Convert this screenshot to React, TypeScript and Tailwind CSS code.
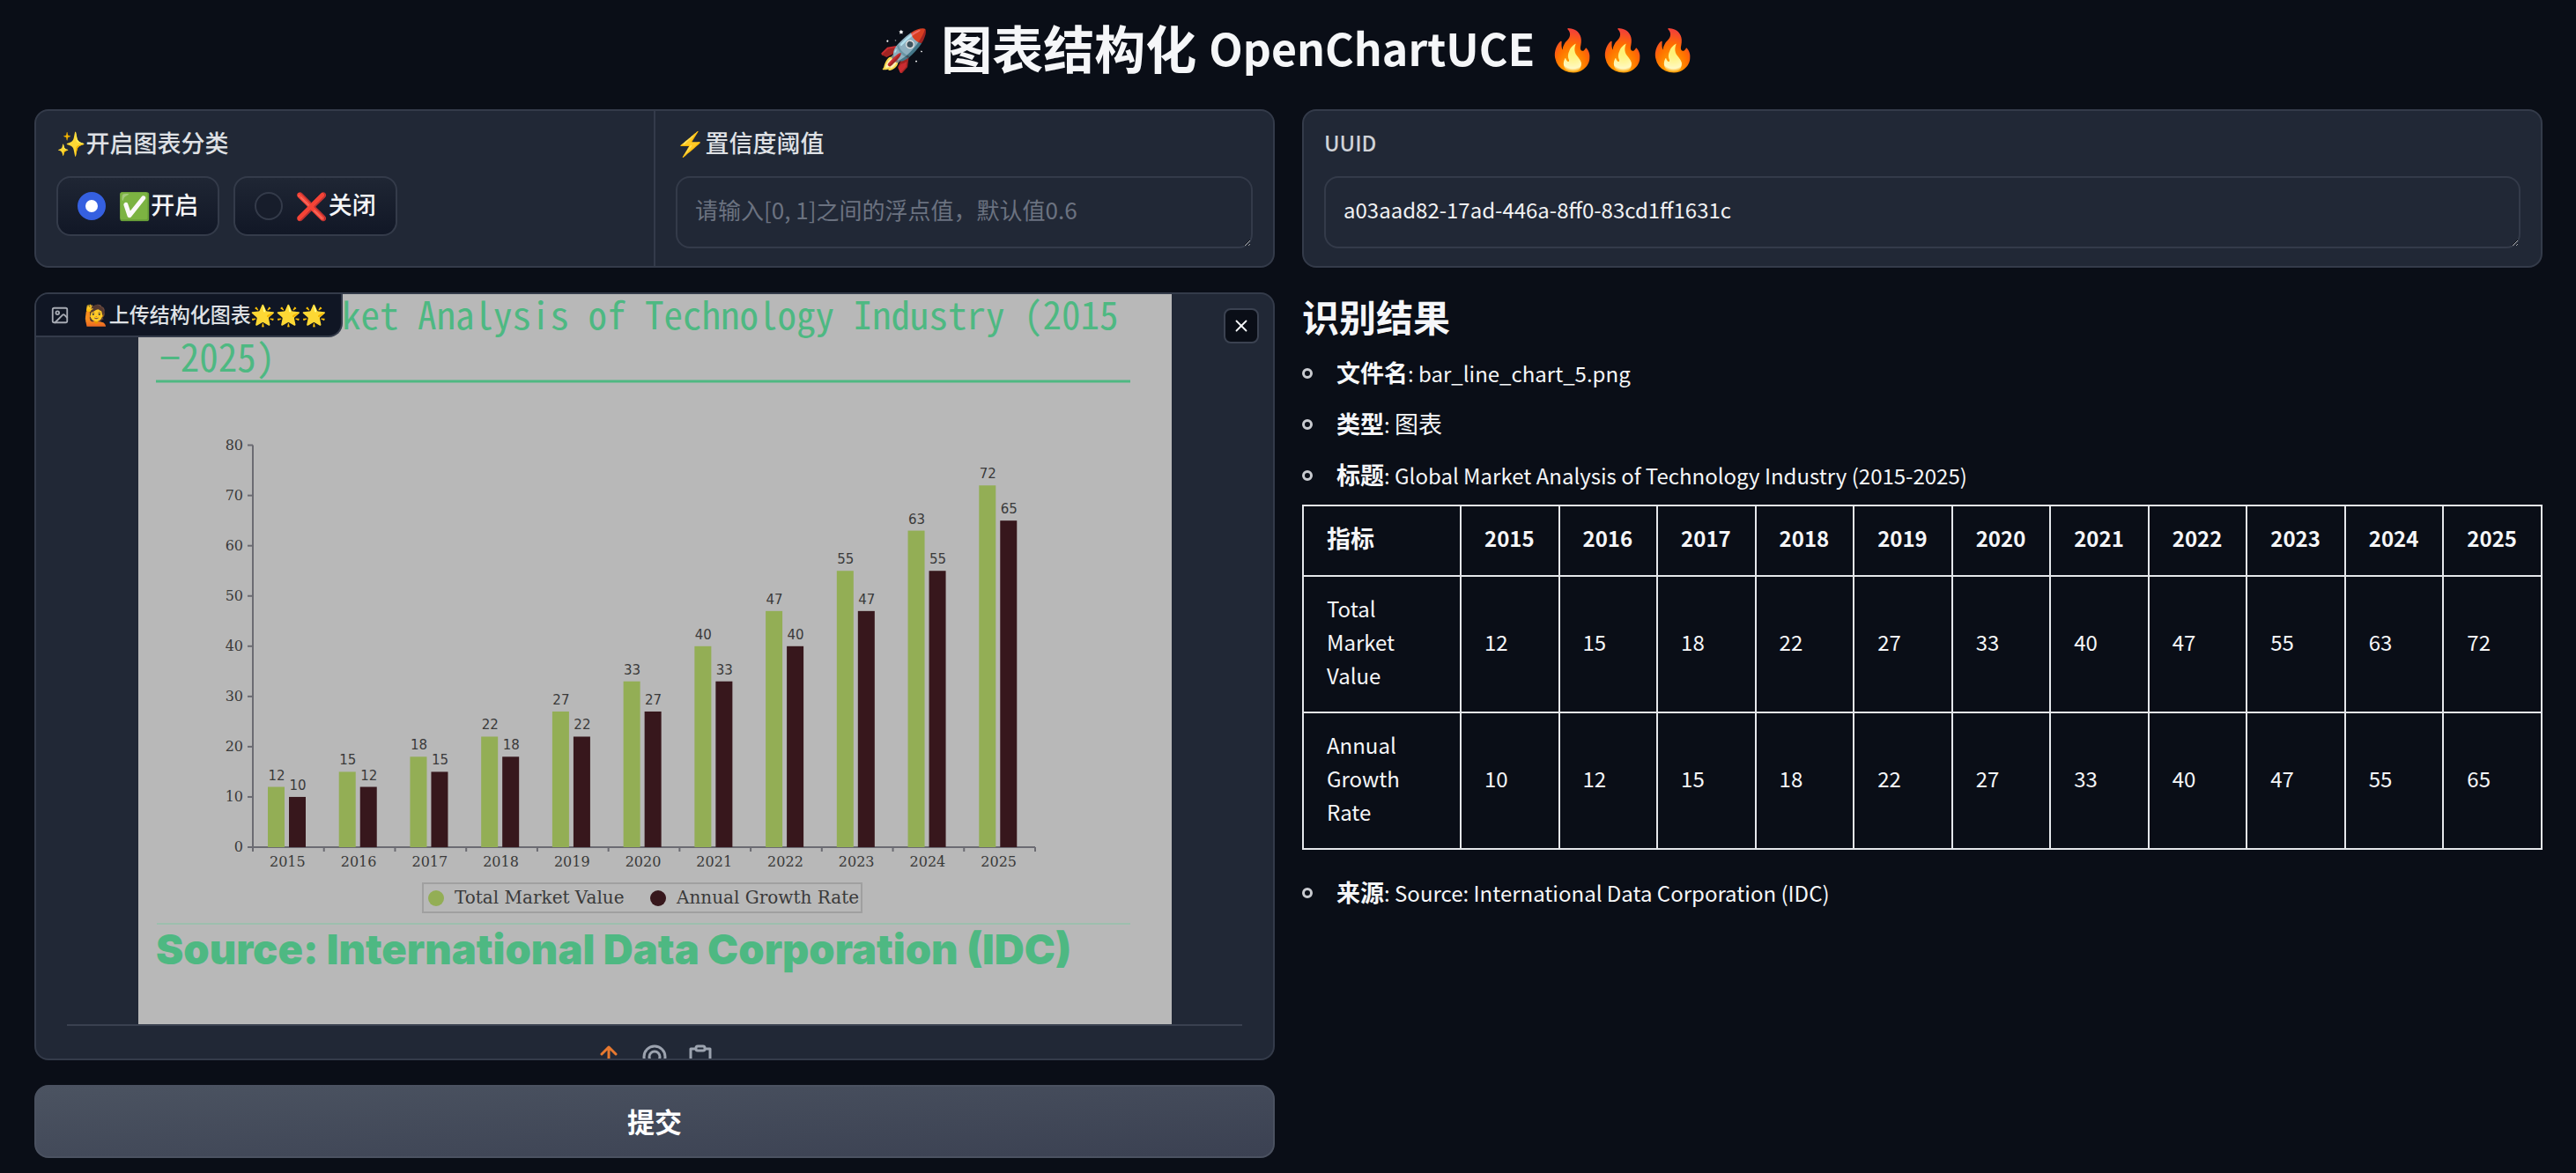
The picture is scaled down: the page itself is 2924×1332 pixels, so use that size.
import { useState } from 'react';
import type { ReactNode } from 'react';
import { Image as ImageIcon, X } from 'lucide-react';

const years = [2015, 2016, 2017, 2018, 2019, 2020, 2021, 2022, 2023, 2024, 2025];
const marketValue = [12, 15, 18, 22, 27, 33, 40, 47, 55, 63, 72];
const growthRate = [10, 12, 15, 18, 22, 27, 33, 40, 47, 55, 65];
const ticks = [0, 10, 20, 30, 40, 50, 60, 70, 80];

const AXIS_X = 130;
const AXIS_Y = 628;
const AXIS_END = 1018;
const STEP = (AXIS_END - AXIS_X) / years.length;
const UNIT = 5.705;

function Bar({ x, value, color }: { x: number; value: number; color: string }) {
  const top = AXIS_Y - value * UNIT;
  return (
    <g>
      <rect x={x} y={top} width={19} height={value * UNIT} fill={color} />
      <text x={x + 10} y={top - 8} textAnchor="middle" className="fill-[#3a3a3a] font-['DejaVu_Sans'] text-[15px]">
        {value}
      </text>
    </g>
  );
}

function UploadedChart() {
  return (
    <svg
      viewBox="0 0 1173 829"
      role="img"
      aria-label="Global Market Analysis of Technology Industry"
      className="h-auto w-full max-w-[1173px] bg-[#b8b8b8]"
    >
      <g className="fill-[#4eb882] font-['Noto_Sans_Mono_CJK_SC',monospace] text-[43px]">
        <text x="16" y="40">Global Market Analysis of Technology Industry (2015</text>
        <text x="24" y="88">−2025)</text>
      </g>
      <line x1="20" x2="1126" y1="99" y2="99" stroke="#4eb882" strokeWidth="3" />

      <g stroke="#6b6b72" strokeWidth="2">
        <line x1={AXIS_X} x2={AXIS_X} y1={AXIS_Y - 80 * UNIT} y2={AXIS_Y + 5} />
        <line x1={AXIS_X - 6} x2={AXIS_END} y1={AXIS_Y} y2={AXIS_Y} />
        {ticks.map((t) => (
          <line key={t} x1={AXIS_X - 6} x2={AXIS_X} y1={AXIS_Y - t * UNIT} y2={AXIS_Y - t * UNIT} />
        ))}
        {years.map((y, i) => (
          <line key={y} x1={AXIS_X + (i + 1) * STEP} x2={AXIS_X + (i + 1) * STEP} y1={AXIS_Y} y2={AXIS_Y + 5} />
        ))}
      </g>
      <g className="fill-[#3a3a3a] font-['DejaVu_Serif'] text-[16px]">
        {ticks.map((t) => (
          <text key={t} x={AXIS_X - 11} y={AXIS_Y - t * UNIT + 5} textAnchor="end">
            {t}
          </text>
        ))}
        {years.map((y, i) => (
          <text key={y} x={AXIS_X - 1 + (i + 0.5) * STEP} y={AXIS_Y + 22} textAnchor="middle">
            {y}
          </text>
        ))}
      </g>
      {years.map((y, i) => (
        <g key={y}>
          <Bar x={AXIS_X + i * STEP + 17} value={marketValue[i]} color="#93ae55" />
          <Bar x={AXIS_X + i * STEP + 41} value={growthRate[i]} color="#37171c" />
        </g>
      ))}

      <rect x="323" y="669" width="498" height="33" fill="none" stroke="#a0a0a0" strokeWidth="2" />
      <circle cx="338" cy="686" r="9" fill="#93ae55" />
      <circle cx="590" cy="686" r="9" fill="#37171c" />
      <g className="fill-[#3a3a3a] font-['DejaVu_Serif'] text-[20px]">
        <text x="359" y="692">Total Market Value</text>
        <text x="611" y="692">Annual Growth Rate</text>
      </g>

      <line x1="21" x2="1126" y1="715" y2="715" stroke="#9dbfae" strokeWidth="2" />
      <text x="20" y="761" className="fill-[#4eb882] font-['Inter'] text-[47px] font-black">
        Source: International Data Corporation (IDC)
      </text>
    </svg>
  );
}

function RadioPill({ emoji, text, checked, onChange }: { emoji: string; text: string; checked: boolean; onChange: () => void }) {
  return (
    <label className="flex h-[68px] cursor-pointer items-center gap-3.5 rounded-2xl border-2 border-[#343b4a] bg-linear-to-b from-[#1f2634] to-[#111726] px-[22px]">
      <input
        type="radio"
        name="classify"
        checked={checked}
        onChange={onChange}
        className="size-8 appearance-none rounded-full border-2 border-[#343b4a] bg-[#171d2b] checked:border-[9px] checked:border-[#3560e0] checked:bg-white"
      />
      <span className="flex items-center pb-1">
        <span className="text-[30px] leading-9">{emoji}</span>
        <span className="leading-9">{text}</span>
      </span>
    </label>
  );
}

const labelClass = 'flex h-9 items-center text-[27px] font-medium text-[#dfe1e5]';
const areaClass =
  'block h-[82px] w-full resize rounded-2xl border-2 border-[#343b4a] bg-[#212836] px-5 pt-[17px] pb-5 leading-[38px] text-[#f0f1f3] outline-none placeholder:text-[#6b7280]';

function ResultItem({ name, children }: { name: string; children: ReactNode }) {
  return (
    <li className="flex h-[38px] items-center gap-[27px]">
      <span className="size-3 rounded-full border-[3px] border-[#c9cbd0]" />
      <span>
        <strong className="text-[27px] leading-none">{name}</strong>: {children}
      </span>
    </li>
  );
}

const cellClass = 'border-2 border-[#e5e7eb] px-[26px] text-left';

function ResultTable() {
  const rows = [
    { name: 'Total Market Value', values: marketValue },
    { name: 'Annual Growth Rate', values: growthRate },
  ];
  return (
    <table className="mt-[14px] mb-[30px] w-full table-fixed border-collapse leading-[38px]">
      <thead>
        <tr>
          <th className={`${cellClass} w-[179px] pt-[17px] pb-[23px] text-[27px]`}>指标</th>
          {years.map((y) => (
            <th key={y} className={`${cellClass} pt-[17px] pb-[23px]`}>{y}</th>
          ))}
        </tr>
      </thead>
      <tbody>
        {rows.map((row) => (
          <tr key={row.name}>
            <td className={`${cellClass} pt-[17px] pb-[22px]`}>
              <span className="block w-min">{row.name}</span>
            </td>
            {row.values.map((v, i) => (
              <td key={years[i]} className={`${cellClass} pt-[17px] pb-[22px]`}>{v}</td>
            ))}
          </tr>
        ))}
      </tbody>
    </table>
  );
}

export default function App() {
  const [enabled, setEnabled] = useState(true);
  return (
    <main className="min-h-screen bg-[#0a0e17] pt-[11px] pr-[38px] pb-4 pl-[39px] font-['Noto_Sans_CJK_SC','Noto_Color_Emoji',sans-serif] text-[24px] text-[#f5f6f8] scheme-dark">
      <h1 className="mb-[29px] flex h-[84px] items-center justify-center gap-3.5 text-[50px] font-bold">
        <span className="text-[46px]">🚀</span>
        <span className="text-[58px]">图表结构化</span>
        <span>OpenChartUCE</span>
        <span className="text-[46px]">🔥🔥🔥</span>
      </h1>

      <div className="grid grid-cols-2 gap-[31px]">
        <div className="flex flex-col gap-7">
          <div className="grid grid-cols-2 gap-[2px] overflow-hidden rounded-2xl border-2 border-[#343b4a] bg-[#343b4a]">
            <div role="radiogroup" aria-labelledby="classify-label" className="bg-[#212836] px-[23px] pt-[18px] pb-5">
              <div id="classify-label" className={labelClass}>
                ✨开启图表分类
              </div>
              <div className="mt-5 flex gap-4 text-[27px] font-medium">
                <RadioPill emoji="✅" text="开启" checked={enabled} onChange={() => setEnabled(true)} />
                <RadioPill emoji="❌" text="关闭" checked={!enabled} onChange={() => setEnabled(false)} />
              </div>
            </div>
            <div className="bg-[#212836] px-[23px] pt-[18px] pb-5">
              <label htmlFor="threshold" className={labelClass}>
                ⚡置信度阈值
              </label>
              <div className="mt-5">
                <textarea id="threshold" rows={1} placeholder="请输入[0, 1]之间的浮点值，默认值0.6" className={`${areaClass} text-[26px]`} />
              </div>
            </div>
          </div>

          <section className="relative h-[872px] overflow-hidden rounded-2xl border-2 border-[#343b4a] bg-[#212836]">
            <div className="flex justify-center">
              <UploadedChart />
            </div>
            <div className="mx-[35px] flex justify-center gap-5 border-t-2 border-[#3a4150] pt-[19px]">
              <button type="button" aria-label="Upload" className="size-8">
                <svg viewBox="0 0 32 32" fill="none" stroke="#e8792f" strokeWidth="3" strokeLinecap="round" strokeLinejoin="round">
                  <path d="M8 13l8-8 8 8M16 5v20" />
                </svg>
              </button>
              <button type="button" aria-label="Webcam" className="size-8">
                <svg viewBox="0 0 32 32" fill="none" stroke="#9ca3af" strokeWidth="3">
                  <circle cx="16" cy="16" r="12" />
                  <circle cx="16" cy="16" r="6" />
                </svg>
              </button>
              <button type="button" aria-label="Paste" className="size-8">
                <svg viewBox="0 0 32 32" fill="none" stroke="#9ca3af" strokeWidth="3" strokeLinecap="round" strokeLinejoin="round">
                  <path d="M10 7H5v22h22V7h-5" />
                  <rect x="11" y="4" width="10" height="5" rx="2" />
                </svg>
              </button>
            </div>
            <div className="absolute top-0 left-0 flex h-[49px] items-center gap-4 rounded-br-2xl border-r-2 border-b-2 border-[#343b4a] bg-[#101624] px-4 text-[23px] font-medium text-[#dfe1e5]">
              <ImageIcon size={22} strokeWidth={2} color="#a6aab3" />
              <span className="pb-[3px] leading-8">🙋上传结构化图表🌟🌟🌟</span>
            </div>
            <button
              type="button"
              aria-label="Clear"
              className="absolute top-4 right-4 flex size-10 items-center justify-center rounded-lg border-2 border-[#3b4251] bg-[#0a0e17]"
            >
              <X size={22} strokeWidth={2} />
            </button>
          </section>

          <button
            type="button"
            className="h-[83px] rounded-2xl border-2 border-[#4b5261] bg-linear-to-br from-[#4b5361] to-[#3b4152] text-[31px] font-bold text-white"
          >
            提交
          </button>
        </div>

        <div className="flex flex-col gap-7">
          <div className="rounded-2xl border-2 border-[#343b4a] bg-[#212836] px-[23px] pt-[18px] pb-5">
            <label htmlFor="uuid" className="flex h-9 items-center font-medium text-[#cfd2d7]">
              UUID
            </label>
            <div className="mt-5">
              <textarea id="uuid" rows={1} defaultValue="a03aad82-17ad-446a-8ff0-83cd1ff1631c" className={areaClass} />
            </div>
          </div>

          <section>
            <h2 className="mb-[19px] text-[42px] leading-[54px] font-bold">识别结果</h2>
            <ul className="flex flex-col gap-5">
              <ResultItem name="文件名">bar_line_chart_5.png</ResultItem>
              <ResultItem name="类型">
                <span className="text-[27px] leading-none">图表</span>
              </ResultItem>
              <ResultItem name="标题">Global Market Analysis of Technology Industry (2015-2025)</ResultItem>
            </ul>
            <ResultTable />
            <ul>
              <ResultItem name="来源">Source: International Data Corporation (IDC)</ResultItem>
            </ul>
          </section>
        </div>
      </div>
    </main>
  );
}
